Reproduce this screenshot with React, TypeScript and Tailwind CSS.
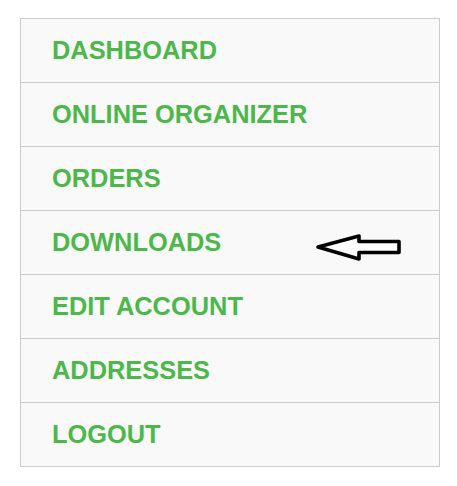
const ITEMS = [
  'DASHBOARD',
  'ONLINE ORGANIZER',
  'ORDERS',
  'DOWNLOADS',
  'EDIT ACCOUNT',
  'ADDRESSES',
  'LOGOUT',
]

export default function App() {
  return (
    <div className="w-[457px] h-[486px] bg-white pt-[18px] pl-[20px]" style={{ fontFamily: '"Liberation Sans", Arial, sans-serif' }}>
      <ul className="w-[420px] border border-[#cccccc] bg-[#f9f9f9]">
        {ITEMS.map((item, i) => (
          <li
            key={item}
            className={`relative flex items-center pl-[31px] ${i > 0 ? 'h-[64px] border-t border-[#cccccc]' : 'h-[63px]'}`}
          >
            <a className="text-[25.4px] font-bold text-[#4db84a] leading-none">{item}</a>
            {item === 'DOWNLOADS' && (
              <svg className="absolute left-[294px] top-[22px]" width="88" height="30" viewBox="0 0 88 30" fill="none">
                <path
                  d="M3 14 L44 3 L44 8.5 L84 8.5 L84 19.5 L44 19.5 L44 26 Z"
                  stroke="#000"
                  strokeWidth="3.6"
                  strokeLinejoin="round"
                  fill="#fff"
                />
              </svg>
            )}
          </li>
        ))}
      </ul>
    </div>
  )
}
